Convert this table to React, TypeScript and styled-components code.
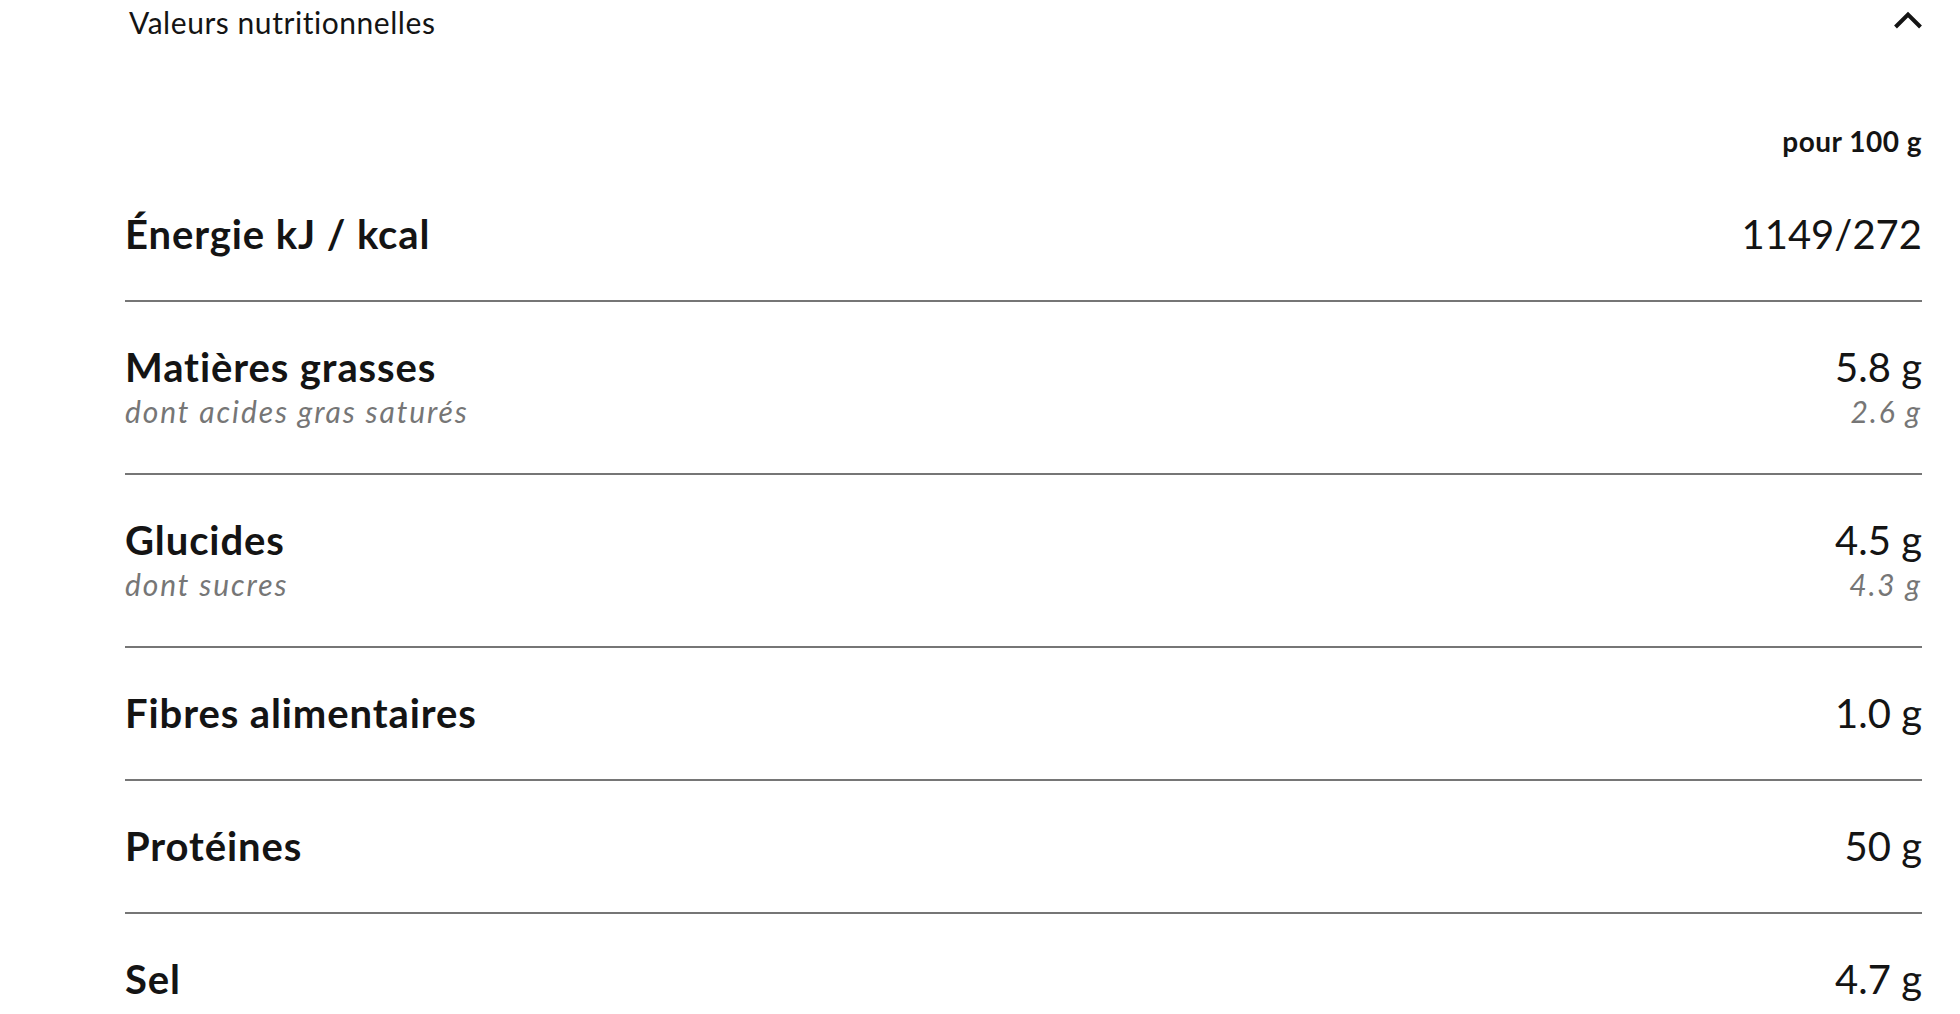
import React from "react";
import styled, { createGlobalStyle } from "styled-components";

const GlobalStyle = createGlobalStyle`
    body {
        margin: 0;
        background: #fff;
        font-family: Lato, "Liberation Sans", sans-serif;
        font-variant-ligatures: none;
        color: #141414;
    }
`

const StyledPage = styled.div `
    padding: 0 38px 0 125px;
`

const StyledHeader = styled.div `
    display: flex;
    justify-content: space-between;
    align-items: center;
    height: 44px;
    padding-left: 4px;
`

const StyledHeaderTitle = styled.span `
    font-size: 30px;
    line-height: 36px;
    font-weight: 400;
    letter-spacing: 0.55px;
`

const StyledChevron = styled.svg `
    width: 28px;
    height: 18px;
    margin-top: -4px;
`

const StyledUnit = styled.div `
    margin-top: 80px;
    margin-bottom: 11px;
    text-align: right;
    font-size: 28px;
    line-height: 34px;
    font-weight: 700;
    letter-spacing: 0.5px;
`

const StyledRow = styled.div<{ $last?: boolean }> `
    display: flex;
    justify-content: space-between;
    align-items: flex-start;
    padding: 41px 0 42px;
    border-bottom: ${(p) => (p.$last ? "none" : "2px solid #767676")};
`

const StyledCell = styled.div<{ $right?: boolean }> `
    display: flex;
    flex-direction: column;
    align-items: ${(p) => (p.$right ? "flex-end" : "flex-start")};
`

const StyledLabel = styled.div `
    font-size: 40px;
    line-height: 48px;
    font-weight: 700;
    letter-spacing: 0.9px;
`

const StyledValue = styled.div `
    font-size: 40px;
    line-height: 48px;
    font-weight: 400;
`

const StyledSub = styled.div `
    font-size: 30px;
    line-height: 40px;
    font-style: italic;
    letter-spacing: 1.9px;
    color: #767676;
`

type Nutrient = {
    label: string;
    value: string;
    sub?: string;
    subValue?: string;
}

const nutrients: Nutrient[] = [
    { label: "Énergie kJ / kcal", value: "1149/272" },
    { label: "Matières grasses", value: "5.8 g", sub: "dont acides gras saturés", subValue: "2.6 g" },
    { label: "Glucides", value: "4.5 g", sub: "dont sucres", subValue: "4.3 g" },
    { label: "Fibres alimentaires", value: "1.0 g" },
    { label: "Protéines", value: "50 g" },
    { label: "Sel", value: "4.7 g" },
]

const App = (): JSX.Element => {
    return (
        <>
        <GlobalStyle />
        <StyledPage>
            <StyledHeader>
                <StyledHeaderTitle>Valeurs nutritionnelles</StyledHeaderTitle>
                <StyledChevron viewBox="0 0 28 18">
                    <polyline points="1.5,16 14,3.5 26.5,16" fill="none" stroke="#141414" strokeWidth="4" />
                </StyledChevron>
            </StyledHeader>
            <StyledUnit>pour 100 g</StyledUnit>
            {nutrients.map((n, i) => (
                <StyledRow key={n.label} $last={i === nutrients.length - 1}>
                    <StyledCell>
                        <StyledLabel>{n.label}</StyledLabel>
                        {n.sub && <StyledSub>{n.sub}</StyledSub>}
                    </StyledCell>
                    <StyledCell $right>
                        <StyledValue>{n.value}</StyledValue>
                        {n.subValue && <StyledSub>{n.subValue}</StyledSub>}
                    </StyledCell>
                </StyledRow>
            ))}
        </StyledPage>
        </>
    )
}

export default App;
